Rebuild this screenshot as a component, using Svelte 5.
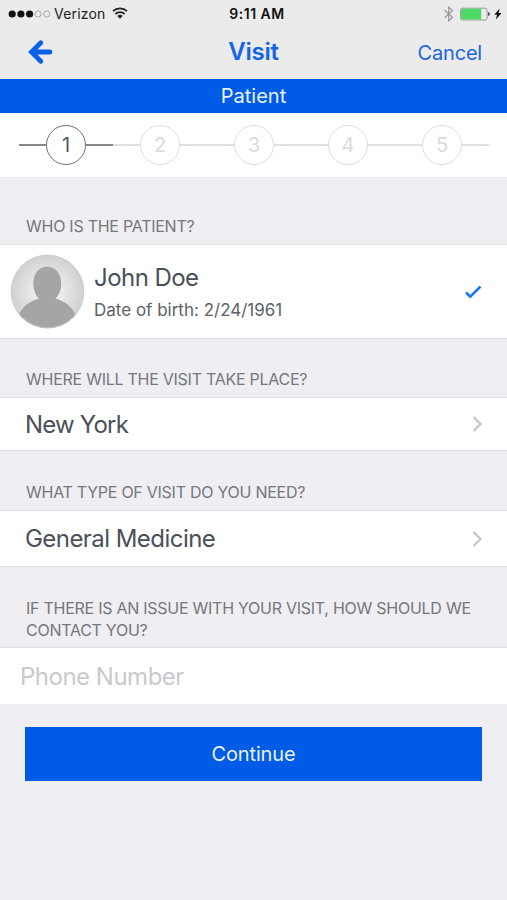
<script>
  let phone = "";

  const steps = [1, 2, 3, 4, 5];
  const current = 1;

  const patient = {
    name: "John Doe",
    birth: "2/24/1961"
  };
</script>

<style>
  :global(body) {
    background: #eeeef3;
  }

  .app {
    width: 507px;
    height: 900px;
    overflow: hidden;
    background: #eeeef3;
    font-family: Inter, "Liberation Sans", sans-serif;
    color: #4a5058;
  }

  header {
    height: 79px;
    background: #ebebeb;
  }

  .status {
    display: grid;
    grid-template-columns: 1fr auto 1fr;
    align-items: center;
    height: 27px;
    padding: 0 5px 0 8px;
    font-size: 14px;
    color: #222;
  }

  .carrier,
  .power {
    display: flex;
    align-items: center;
  }

  .power {
    justify-content: flex-end;
  }

  .carrier span {
    margin: 0 6px 0 3px;
    letter-spacing: 0.2px;
  }

  .time {
    margin-left: 4px;
    font-weight: 600;
    letter-spacing: 0.5px;
    color: #111;
  }

  svg {
    display: block;
    flex: none;
  }

  nav {
    display: grid;
    grid-template-columns: 1fr auto 1fr;
    align-items: center;
    height: 50px;
    padding: 0 25px 0 28px;
  }

  button {
    margin: 0;
    padding: 0;
    border: 0;
    background: none;
    font: inherit;
  }

  h1 {
    margin: 0 0 0 -3px;
    font-size: 24px;
    font-weight: 600;
    letter-spacing: -0.2px;
    line-height: 30px;
    color: #1464ea;
  }

  .cancel {
    justify-self: end;
    margin-top: 2px;
    font-size: 20px;
    letter-spacing: -0.2px;
    color: #2066e0;
  }

  .title {
    height: 34px;
    line-height: 35px;
    background: #005be6;
    color: #e8f3ff;
    font-size: 20px;
    text-align: center;
  }

  .steps {
    display: flex;
    height: 64px;
    padding: 0 18px 0 19px;
    background: #fff;
  }

  .step {
    flex: 1;
    display: flex;
    align-items: center;
    color: #d9dbdc;
  }

  .step::before,
  .step::after {
    content: "";
    flex: 1;
    height: 2px;
    background: #dfe1e2;
  }

  .step span {
    box-sizing: border-box;
    width: 40px;
    height: 40px;
    border: 1.5px solid #dcdedf;
    border-radius: 50%;
    font-size: 20px;
    line-height: 39px;
    text-align: center;
  }

  .step.active {
    color: #55595d;
  }

  .step.active::before,
  .step.active::after {
    background: #85898c;
  }

  .step.active span {
    border-color: #6d7174;
  }

  .label {
    display: flex;
    align-items: flex-end;
    box-sizing: border-box;
    height: 58px;
    margin: 0;
    padding: 0 25px 7px 26px;
    font-size: 16px;
    font-weight: 400;
    letter-spacing: -0.26px;
    line-height: 22px;
    color: #77777c;
  }

  .label.first {
    height: 67px;
  }

  .label.type {
    height: 59px;
  }

  .label.tall {
    height: 80px;
    padding-bottom: 6px;
  }

  .row {
    display: flex;
    align-items: center;
    justify-content: space-between;
    box-sizing: border-box;
    width: 100%;
    height: 54px;
    padding: 0 24px 0 25px;
    border-top: 1px solid #e2e2e6;
    border-bottom: 1px solid #dfdfe3;
    background: #fff;
    font-size: 24px;
    letter-spacing: -0.55px;
    color: #4a5058;
  }

  .place {
    letter-spacing: -0.8px;
  }

  .row.visit {
    height: 57px;
  }

  .patient {
    height: 95px;
    padding-left: 10px;
    justify-content: flex-start;
  }

  .info {
    flex: 1;
    margin-left: 9px;
    padding-top: 5px;
  }

  .name {
    line-height: 32px;
  }

  .birth {
    font-size: 17px;
    letter-spacing: 0;
    line-height: 32px;
    color: #5c6168;
  }

  input {
    display: block;
    box-sizing: border-box;
    width: 100%;
    height: 57px;
    padding: 0 20px;
    border: 0;
    border-top: 1px solid #e2e2e6;
    border-radius: 0;
    background: #fff;
    font: inherit;
    font-size: 24px;
    letter-spacing: -0.5px;
  }

  input::placeholder {
    color: #c9c9ce;
    opacity: 1;
  }

  .continue {
    display: block;
    width: 457px;
    height: 54px;
    margin: 23px 25px 0;
    background: #005be6;
    color: #e8f4ff;
    font-size: 20px;
    letter-spacing: -0.15px;
  }
</style>

<div class="app">
  <header>
    <div class="status">
      <div class="carrier">
        <svg width="43" height="10" viewBox="0 0 43 10">
          <circle cx="4.2" cy="5" r="3.6" fill="#111" />
          <circle cx="12.9" cy="5" r="3.6" fill="#111" />
          <circle cx="21.6" cy="5" r="3.6" fill="#111" />
          <circle cx="30" cy="5" r="3.1" fill="none" stroke="#aaa" />
          <circle cx="38.6" cy="5" r="3.1" fill="none" stroke="#aaa" />
        </svg>
        <span>Verizon</span>
        <svg width="16" height="14" viewBox="0 0 16 14">
          <path d="M1 4.2a10.3 10.3 0 0 1 14 0M3.4 7a6.8 6.8 0 0 1 9.2 0" fill="none" stroke="#222" stroke-width="1.8" />
          <path d="M5.3 8.9a4 4 0 0 1 5.4 0L8 11.7z" fill="#222" />
        </svg>
      </div>
      <div class="time">9:11 AM</div>
      <div class="power">
        <svg width="12" height="16" viewBox="0 0 12 16">
          <path d="M1.5 4.3l8 7L5.7 15V1l3.8 3.7-8 7" fill="none" stroke="#999" stroke-width="1.2" />
        </svg>
        <svg width="39" height="14" viewBox="0 0 39 14">
          <rect x="5.6" y="1.2" width="26.5" height="11.8" rx="2" fill="#eee" stroke="#999" />
          <path d="M7.5 1.7h18.7v10.8H7.5a1.4 1.4 0 0 1-1.4-1.4v-8a1.4 1.4 0 0 1 1.4-1.4z" fill="#4cd964" />
          <path d="M33.2 5.1c2 .4 2 3.6 0 4z" fill="#333" />
        </svg>
        <svg width="8" height="12" viewBox="0 0 8 12">
          <path d="M5.6 .6L.3 6.8h2.8L1.8 11.6 7.6 5H4.6z" fill="#111" />
        </svg>
      </div>
    </div>
    <nav>
      <button aria-label="Back">
        <svg width="25" height="26" viewBox="0 0 25 26">
          <path d="M12.8 3.7L3.5 13l9.3 9.3M4 13h18" fill="none" stroke="#0a60e8" stroke-width="4.8" stroke-linecap="round" stroke-linejoin="miter" />
        </svg>
      </button>
      <h1>Visit</h1>
      <button class="cancel">Cancel</button>
    </nav>
  </header>

  <div class="title">Patient</div>

  <div class="steps">
    {#each steps as step}
      <div class="step" class:active={step === current}><span>{step}</span></div>
    {/each}
  </div>

  <h2 class="label first">WHO IS THE PATIENT?</h2>
  <div class="row patient">
    <svg width="75" height="75" viewBox="0 0 75 75">
      <defs>
        <radialGradient id="shade">
          <stop offset="0.35" stop-color="#ececec" />
          <stop offset="1" stop-color="#cfcfcf" />
        </radialGradient>
        <clipPath id="round"><circle cx="37.5" cy="37.5" r="36.7" /></clipPath>
      </defs>
      <g clip-path="url(#round)">
        <rect width="75" height="75" fill="url(#shade)" />
        <path d="M37.2 12.8c8.200 0 14 6.600 14 16.500 0 6.700-2.200 12-5.700 15.500C54 46.500 62.500 53 66 62V75H8V62c4-9 12.500-15.500 21-17.200-3.500-3.500-5.700-8.800-5.700-15.500 0-9.900 5.800-16.500 13.900-16.500z" fill="#a5a5a5" />
      </g>
      <circle cx="37.5" cy="37.5" r="36.3" fill="none" stroke="#ccc" stroke-width="0.8" />
    </svg>
    <div class="info">
      <div class="name">{patient.name}</div>
      <div class="birth">Date of birth: {patient.birth}</div>
    </div>
    <svg width="18" height="14" viewBox="0 0 18 14">
      <path d="M1 7.5l4.200 4.200L15.500 1.500" fill="none" stroke="#157af0" stroke-width="2.6" />
    </svg>
  </div>

  <h2 class="label">WHERE WILL THE VISIT TAKE PLACE?</h2>
  <button class="row">
    <span class="place">New York</span>
    <svg width="11" height="18" viewBox="0 0 11 18">
      <path d="M1.5 2l7 7-7 7" fill="none" stroke="#c4c4c8" stroke-width="2.2" />
    </svg>
  </button>

  <h2 class="label type">WHAT TYPE OF VISIT DO YOU NEED?</h2>
  <button class="row visit">
    <span>General Medicine</span>
    <svg width="11" height="18" viewBox="0 0 11 18">
      <path d="M1.5 2l7 7-7 7" fill="none" stroke="#c4c4c8" stroke-width="2.2" />
    </svg>
  </button>

  <h2 class="label tall">IF THERE IS AN ISSUE WITH YOUR VISIT, HOW SHOULD WE CONTACT YOU?</h2>
  <input type="tel" placeholder="Phone Number" bind:value={phone} />

  <button class="continue">Continue</button>
</div>
